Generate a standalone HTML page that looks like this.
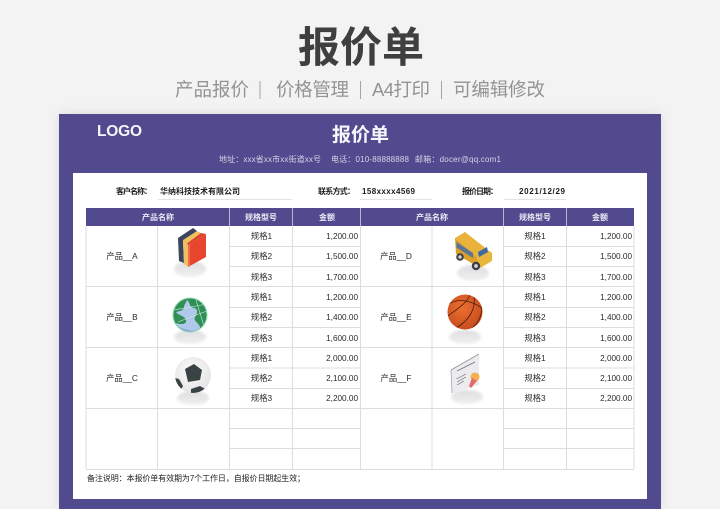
<!DOCTYPE html>
<html lang="zh"><head><meta charset="utf-8"><title>报价单</title>
<style>
html,body{margin:0;padding:0;background:#f3f3f3;width:720px;height:509px;overflow:hidden}
svg{display:block;position:absolute;left:0;top:0}
text{font-family:"Liberation Sans","Noto Sans CJK SC",sans-serif}
.h{font-size:8px;fill:#e9e8f3;font-weight:700;text-anchor:middle}
.c{font-size:8.3px;fill:#2b2b2b;text-anchor:middle}
.n{font-size:8.2px;fill:#2b2b2b;text-anchor:end}
.i{font-size:8px;fill:#1c1c1c;font-weight:700}
.s{font-size:18.5px;fill:#939393}
.a{font-size:8px;fill:#d5d4e6}
.l{stroke:#dcdce2;stroke-width:1;fill:none}
</style></head><body>
<svg width="720" height="509" viewBox="0 0 720 509" xmlns="http://www.w3.org/2000/svg">
<defs>
<filter id="sh" x="-10%" y="-10%" width="120%" height="120%"><feGaussianBlur stdDeviation="5"/></filter>
<filter id="so" x="-30%" y="-50%" width="160%" height="200%"><feGaussianBlur stdDeviation="1.2"/></filter>
<radialGradient id="bb" cx=".42" cy=".38" r=".7"><stop offset="0" stop-color="#ec6f30"/><stop offset="1" stop-color="#c4481c"/></radialGradient>
<radialGradient id="sb" cx=".45" cy=".4" r=".7"><stop offset="0" stop-color="#fbfbfb"/><stop offset=".8" stop-color="#e6e6e6"/><stop offset="1" stop-color="#c4c4c4"/></radialGradient>
<linearGradient id="sd" x1="0" y1="0" x2="0" y2="1"><stop offset="0" stop-color="#dedee0"/><stop offset="1" stop-color="#f0f0f1"/></linearGradient>
<clipPath id="gc"><circle cx="190" cy="315" r="16.500"/></clipPath>
<clipPath id="bc"><circle cx="465" cy="312" r="17.500"/></clipPath>
<clipPath id="fc"><circle cx="193" cy="375" r="18"/></clipPath>
</defs>

<text x="298" y="62" font-size="42" font-weight="700" fill="#3f3f3f" textLength="126">报价单</text>
<text class="s" x="175" y="96" textLength="74">产品报价</text>
<rect x="259.500" y="81" width="1" height="18" fill="#a5a5a5"/>
<text class="s" x="276" y="96" textLength="73">价格管理</text>
<rect x="360" y="81" width="1" height="18" fill="#a5a5a5"/>
<text class="s" x="372" y="96" textLength="58">A4打印</text>
<rect x="441" y="81" width="1" height="18" fill="#a5a5a5"/>
<text class="s" x="453" y="96" textLength="92">可编辑修改</text>

<rect x="59" y="114" width="602" height="395" fill="#aaa" opacity=".35" filter="url(#sh)"/>
<rect x="59" y="114" width="602" height="395" fill="#524a8e"/>
<rect x="73" y="173" width="574" height="326" fill="#fff"/>

<text x="97" y="136" font-size="15.500" font-weight="700" fill="#f4f4fa" textLength="45" lengthAdjust="spacing">LOGO</text>
<text x="332" y="141" font-size="19" font-weight="700" fill="#f6f6fb" textLength="57">报价单</text>
<text class="a" x="219" y="162" textLength="102">地址：xxx省xx市xx街道xx号</text>
<text class="a" x="331" y="162" textLength="78">电话：010-88888888</text>
<text class="a" x="415" y="162" textLength="86">邮箱：docer@qq.com1</text>

<text class="i" x="116" y="194" textLength="36">客户名称：</text>
<text class="i" x="160" y="194" textLength="80">华纳科技技术有限公司</text>
<text class="i" x="318" y="194" textLength="37">联系方式：</text>
<text class="i" x="362" y="194" textLength="53">158xxxx4569</text>
<text class="i" x="462" y="194" textLength="36">报价日期：</text>
<text class="i" x="519" y="194" textLength="46">2021/12/29</text>
<path d="M158 199.500H292M360 199.500H432M504 199.500H566" stroke="#e3e3e8" stroke-width="1" fill="none"/>

<rect x="86" y="208" width="548" height="18" fill="#524a8e"/>
<path d="M229.500 208V226M292.500 208V226M360.500 208V226M503.500 208V226M566.500 208V226" stroke="#b9b6d6" stroke-width="1"/>
<text class="h" x="158" y="220">产品名称</text>
<text class="h" x="261" y="220">规格型号</text>
<text class="h" x="327" y="220">金额</text>
<text class="h" x="432" y="220">产品名称</text>
<text class="h" x="535" y="220">规格型号</text>
<text class="h" x="600" y="220">金额</text>

<path class="l" d="M86 226V469.500M157.500 226V469.500M229.500 226V469.500M292.500 226V469.500M360.500 226V469.500M432 226V469.500M503.500 226V469.500M566.500 226V469.500M634 226V469.500"/>
<path class="l" d="M86 286.500H634M86 347.500H634M86 408.500H634M86 469.500H634"/>
<path class="l" d="M229.500 246.500H360.500M229.500 266.500H360.500M229.500 307.500H360.500M229.500 327.500H360.500M229.500 368H360.500M229.500 388.500H360.500M229.500 428.500H360.500M229.500 448.500H360.500M503.500 246.500H634M503.500 266.500H634M503.500 307.500H634M503.500 327.500H634M503.500 368H634M503.500 388.500H634M503.500 428.500H634M503.500 448.500H634"/>

<text class="c" x="122" y="259">产品__A</text>
<text class="c" x="122" y="320">产品__B</text>
<text class="c" x="122" y="381">产品__C</text>
<text class="c" x="396" y="259">产品__D</text>
<text class="c" x="396" y="320">产品__E</text>
<text class="c" x="396" y="381">产品__F</text>

<text class="c" x="261.500" y="239">规格1</text><text class="c" x="261.500" y="259">规格2</text><text class="c" x="261.500" y="280">规格3</text>
<text class="c" x="261.500" y="300">规格1</text><text class="c" x="261.500" y="320">规格2</text><text class="c" x="261.500" y="341">规格3</text>
<text class="c" x="261.500" y="361">规格1</text><text class="c" x="261.500" y="381">规格2</text><text class="c" x="261.500" y="401">规格3</text>
<text class="c" x="535" y="239">规格1</text><text class="c" x="535" y="259">规格2</text><text class="c" x="535" y="280">规格3</text>
<text class="c" x="535" y="300">规格1</text><text class="c" x="535" y="320">规格2</text><text class="c" x="535" y="341">规格3</text>
<text class="c" x="535" y="361">规格1</text><text class="c" x="535" y="381">规格2</text><text class="c" x="535" y="401">规格3</text>

<text class="n" x="358" y="239">1,200.00</text><text class="n" x="358" y="259">1,500.00</text><text class="n" x="358" y="280">1,700.00</text>
<text class="n" x="358" y="300">1,200.00</text><text class="n" x="358" y="320">1,400.00</text><text class="n" x="358" y="341">1,600.00</text>
<text class="n" x="358" y="361">2,000.00</text><text class="n" x="358" y="381">2,100.00</text><text class="n" x="358" y="401">2,200.00</text>
<text class="n" x="632" y="239">1,200.00</text><text class="n" x="632" y="259">1,500.00</text><text class="n" x="632" y="280">1,700.00</text>
<text class="n" x="632" y="300">1,200.00</text><text class="n" x="632" y="320">1,400.00</text><text class="n" x="632" y="341">1,600.00</text>
<text class="n" x="632" y="361">2,000.00</text><text class="n" x="632" y="381">2,100.00</text><text class="n" x="632" y="401">2,200.00</text>

<text x="87" y="481" font-size="8" fill="#222" textLength="218">备注说明：本报价单有效期为7个工作日，自报价日期起生效；</text>

<!-- books -->
<ellipse cx="190" cy="269" rx="16" ry="8" fill="url(#sd)" filter="url(#so)"/>
<path d="M178 238L193 228L197 231L183 241L184 263L179 261Z" fill="#3b4560"/>
<path d="M183 240L197 231L202 233.500L188 245V267L184 264Z" fill="#f1bf5e"/>
<path d="M187 243.500L201 233L206 234L188 245Z" fill="#d9442e"/>
<path d="M188 245L206 234V257L188 267Z" fill="#e8452f"/>
<path d="M188 245L190 244V266L188 267Z" fill="#f06a4c"/>

<!-- globe -->
<ellipse cx="190" cy="337" rx="16" ry="7" fill="url(#sd)" filter="url(#so)"/>
<circle cx="190" cy="315" r="17.500" fill="#8fd8ac"/>
<circle cx="190" cy="315" r="16.500" fill="#2f8f55"/>
<g clip-path="url(#gc)">
<path d="M187 300C191 303 188 306 194 308C199 309 197 314 195 317C193 321 199 323 200 327C200 331 197 334 192 334C185 334 178 331 175 323C182 325 187 324 186 320C184 315 179 316 176 312C181 311 185 310 184 306Z" fill="#b0c8ea"/>
<path d="M176 325C182 329 190 331 198 331L195 335C186 335 179 331 176 325Z" fill="#8ea6dc"/>
<path d="M174 310C184 308 198 306 206 304M178 322C188 318 198 314 207 311M196 300L204 326" stroke="#cfe8d9" stroke-width=".6" fill="none"/>
</g>

<!-- soccer ball -->
<ellipse cx="193" cy="398" rx="16" ry="7" fill="url(#sd)" filter="url(#so)"/>
<circle cx="193" cy="375" r="18" fill="url(#sb)"/>
<g clip-path="url(#fc)" fill="#3a4343">
<path d="M185 369L194 364L202 370L200 380L188 382Z"/>
<path d="M175 378L179 379L183 386L179 393L174 388Z"/>
<path d="M191 389L200 386L207 390L199 397L191 397Z"/>
</g>

<!-- bus -->
<ellipse cx="473" cy="273" rx="16" ry="8" fill="url(#sd)" filter="url(#so)"/>
<path d="M455 238L465 232L488 250L477 257Z" fill="#e9b23a"/>
<path d="M455 238L477 257L480 268L456 254Z" fill="#d9a02a"/>
<path d="M477 257L488 250L492 253V261L480 268Z" fill="#eab53c"/>
<path d="M456.500 242L473 253V258L456.500 247.500Z" fill="#5a7494"/>
<path d="M478 252L487 247L488 252L479 257Z" fill="#3d6aa3"/>
<circle cx="460" cy="257" r="3.800" fill="#3c3f44"/><circle cx="460" cy="257" r="1.700" fill="#d5d5d5"/>
<circle cx="476" cy="266" r="4.200" fill="#3c3f44"/><circle cx="476" cy="266" r="1.900" fill="#d5d5d5"/>

<!-- basketball -->
<ellipse cx="465" cy="337" rx="16" ry="7" fill="url(#sd)" filter="url(#so)"/>
<circle cx="465" cy="312" r="17.500" fill="url(#bb)"/>
<g clip-path="url(#bc)" fill="none" stroke="#4a1e10" stroke-width=".8">
<path d="M449 304C458 298 470 300 482 308"/>
<path d="M448 316C458 308 466 304 470 295"/>
<path d="M456 328C470 320 476 308 474 296"/>
<path d="M470 330C478 324 482 316 482 306"/>
</g>

<!-- certificate -->
<ellipse cx="467" cy="397" rx="16" ry="7" fill="url(#sd)" filter="url(#so)"/>
<path d="M451 370L479 354V385L452 393Z" fill="#ececef"/>
<path d="M451 370L479 354" stroke="#8c8f96" stroke-width=".8" fill="none"/>
<path d="M451 370L452 393" stroke="#a4a7ad" stroke-width=".8" fill="none"/>
<path d="M457 371L475 362M456.500 379L466 374M457 382L466 377M457 385L464 381" stroke="#6b6e76" stroke-width=".7" fill="none"/>
<circle cx="475" cy="377" r="4.500" fill="#f2b04e"/>
<path d="M469 386L472 378L477 381L471 388Z" fill="#e56a6a"/>
</svg>
</body></html>
